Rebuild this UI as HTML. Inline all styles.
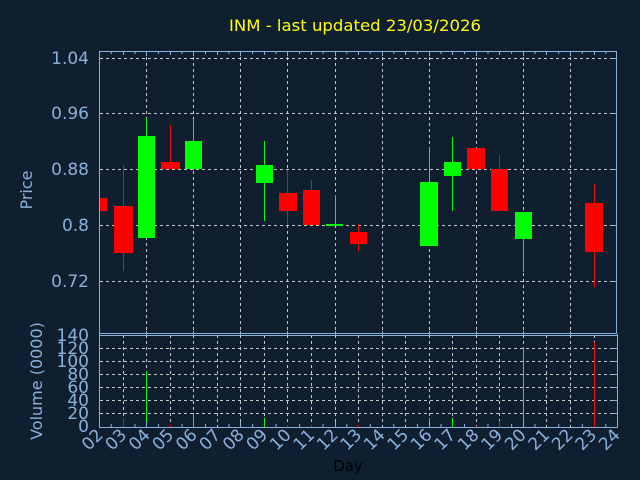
<!DOCTYPE html>
<html><head><meta charset="utf-8"><style>
html,body{margin:0;padding:0;background:#0f1f30;}
svg{display:block}
text{font-family:"DejaVu Sans","Liberation Sans",sans-serif;}
</style></head><body>
<svg width="640" height="480" viewBox="0 0 640 480" xmlns="http://www.w3.org/2000/svg">
<rect width="640" height="480" fill="#0f1f30"/>
<text x="355" y="31" fill="#ffff00" font-size="16" text-anchor="middle" textLength="252" lengthAdjust="spacingAndGlyphs">INM - last updated 23/03/2026</text>
<g stroke="#c8c8c8" stroke-width="1" stroke-dasharray="3,3" fill="none">
<path d="M100 58.5H617M100 113.5H617M100 169.5H617M100 225.5H617M100 281.5H617"/>
<path d="M146.5 51V333M193.5 51V333M240.5 51V333M287.5 51V333M335.5 51V333M382.5 51V333M429.5 51V333M476.5 51V333M523.5 51V333M570.5 51V333"/>
<path d="M100 413.5H617M100 400.5H617M100 387.5H617M100 374.5H617M100 361.5H617M100 348.5H617"/>
<path d="M123.5 335V427M146.5 335V427M170.5 335V427M193.5 335V427M217.5 335V427M240.5 335V427M264.5 335V427M287.5 335V427M311.5 335V427M335.5 335V427M358.5 335V427M382.5 335V427M405.5 335V427M429.5 335V427M452.5 335V427M476.5 335V427M499.5 335V427M523.5 335V427M546.5 335V427M570.5 335V427M594.5 335V427"/>
</g>
<!-- candles -->
<g stroke-width="1">
<rect x="99.5" y="198" width="8" height="13" fill="#ff0000"/>
<path d="M123.5 165V271" stroke="#ff0000"/><rect x="114" y="206" width="19" height="47" fill="#ff0000"/>
<path d="M146.5 118V238" stroke="#00ff00"/><rect x="138" y="136" width="17" height="102" fill="#00ff00"/>
<path d="M170.5 125V169" stroke="#ff0000"/><rect x="161" y="162" width="19" height="7" fill="#ff0000"/>
<path d="M193.5 119V170" stroke="#00ff00"/><rect x="185" y="141" width="17" height="28" fill="#00ff00"/>
<path d="M264.5 141V221" stroke="#00ff00"/><rect x="256" y="165" width="17" height="18" fill="#00ff00"/>
<path d="M287.5 170V225" stroke="#ff0000"/><rect x="279" y="193" width="18" height="18" fill="#ff0000"/>
<path d="M311.5 180V225" stroke="#ff0000"/><rect x="303" y="190" width="17" height="35" fill="#ff0000"/>
<path d="M335.5 195V226" stroke="#00ff00"/><rect x="326" y="224" width="17" height="2" fill="#00ff00"/>
<path d="M358.5 224V251" stroke="#ff0000"/><rect x="350" y="232" width="17" height="12" fill="#ff0000"/>
<path d="M429.5 147V246" stroke="#00ff00"/><rect x="420" y="182" width="18" height="64" fill="#00ff00"/>
<path d="M452.5 137V211" stroke="#00ff00"/><rect x="444" y="162" width="17" height="14" fill="#00ff00"/>
<path d="M476.5 148V169" stroke="#ff0000"/><rect x="467" y="148" width="18" height="21" fill="#ff0000"/>
<path d="M499.5 155V211" stroke="#ff0000"/><rect x="491" y="169" width="17" height="42" fill="#ff0000"/>
<path d="M523.5 212V272" stroke="#00ff00"/><rect x="515" y="212" width="17" height="27" fill="#00ff00"/>
<path d="M594.5 184V287" stroke="#ff0000"/><rect x="585" y="203" width="18" height="49" fill="#ff0000"/>
</g>
<!-- volume -->
<g stroke-width="1">
<path d="M123.5 418V427M170.5 425V427M287.5 425V427M311.5 425V427M358.5 425V427M476.5 426V427M499.5 421V427M594.5 342V427" stroke="#ff0000"/>
<path d="M146.5 371V427M193.5 414V427M264.5 418V427M429.5 418V427M452.5 418V427M523.5 347V427" stroke="#00ff00"/>
</g>
<!-- axes -->
<g stroke="#8cb0dc" stroke-width="1" fill="none">
<rect x="99.5" y="51.5" width="517" height="282"/>
<path d="M99.5 334V427.5H617.5V334M99.5 335.5H617"/>
<path d="M111.3 51V54M135 51V54M158.4 51V54M182 51V54M205.5 51V54M229 51V54M252.6 51V54M276 51V54M299.6 51V54M323 51V54M346.8 51V54M370.3 51V54M393.8 51V54M417.4 51V54M441 51V54M464.5 51V54M488 51V54M511.6 51V54M535 51V54M558.7 51V54M582.3 51V54M605.8 51V54"/>
<path d="M123.5 51V55M146.5 51V56M170.5 51V55M193.5 51V56M217.5 51V55M240.5 51V56M264.5 51V55M287.5 51V56M311.5 51V55M335.5 51V56M358.5 51V55M382.5 51V56M405.5 51V55M429.5 51V56M452.5 51V55M476.5 51V56M499.5 51V55M523.5 51V56M546.5 51V55M570.5 51V56M594.5 51V55"/>
<path d="M111.3 427V424M135 427V424M158.4 427V424M182 427V424M205.5 427V424M229 427V424M252.6 427V424M276 427V424M299.6 427V424M323 427V424M346.8 427V424M370.3 427V424M393.8 427V424M417.4 427V424M441 427V424M464.5 427V424M488 427V424M511.6 427V424M535 427V424M558.7 427V424M582.3 427V424M605.8 427V424"/>
<path d="M146.5 427V422M240.5 427V422M335.5 427V422M429.5 427V422M523.5 427V422M146.5 335V331M193.5 335V331M240.5 335V331M287.5 335V331M335.5 335V331M382.5 335V331M429.5 335V331M476.5 335V331M523.5 335V331M570.5 335V331"/>
<path d="M612 58.5H617M612 113.5H617M612 169.5H617M612 225.5H617M612 281.5H617M612 413.5H617M612 400.5H617M612 387.5H617M612 374.5H617M612 361.5H617M612 348.5H617"/>
</g>
<g fill="#8cb0dc" font-size="17" text-anchor="end">
<text x="89" y="64">1.04</text>
<text x="89" y="119">0.96</text>
<text x="89" y="175">0.88</text>
<text x="89" y="231">0.8</text>
<text x="89" y="287">0.72</text>
<text x="89" y="341">140</text>
<text x="89" y="354">120</text>
<text x="89" y="367">100</text>
<text x="89" y="380">80</text>
<text x="89" y="393">60</text>
<text x="89" y="406">40</text>
<text x="89" y="419">20</text>
<text x="89" y="432">0</text>
</g>
<text transform="translate(32,190) rotate(-90)" fill="#8cb0dc" font-size="16" text-anchor="middle">Price</text>
<text transform="translate(42,381) rotate(-90)" fill="#8cb0dc" font-size="16" text-anchor="middle">Volume (0000)</text>
<text x="348" y="471" fill="#000000" font-size="15" text-anchor="middle">Day</text>
<g fill="#8cb0dc" font-size="17" text-anchor="end">
<text transform="translate(104,436) rotate(-45)">02</text>
<text transform="translate(127.5,436) rotate(-45)">03</text>
<text transform="translate(151,436) rotate(-45)">04</text>
<text transform="translate(174.5,436) rotate(-45)">05</text>
<text transform="translate(198,436) rotate(-45)">06</text>
<text transform="translate(221.5,436) rotate(-45)">07</text>
<text transform="translate(245,436) rotate(-45)">08</text>
<text transform="translate(268.5,436) rotate(-45)">09</text>
<text transform="translate(292,436) rotate(-45)">10</text>
<text transform="translate(315.5,436) rotate(-45)">11</text>
<text transform="translate(339,436) rotate(-45)">12</text>
<text transform="translate(362.5,436) rotate(-45)">13</text>
<text transform="translate(386,436) rotate(-45)">14</text>
<text transform="translate(409.5,436) rotate(-45)">15</text>
<text transform="translate(433,436) rotate(-45)">16</text>
<text transform="translate(456.5,436) rotate(-45)">17</text>
<text transform="translate(480,436) rotate(-45)">18</text>
<text transform="translate(503.5,436) rotate(-45)">19</text>
<text transform="translate(527,436) rotate(-45)">20</text>
<text transform="translate(550.5,436) rotate(-45)">21</text>
<text transform="translate(574,436) rotate(-45)">22</text>
<text transform="translate(597.5,436) rotate(-45)">23</text>
<text transform="translate(621,436) rotate(-45)">24</text>
</g>
</svg>
</body></html>
